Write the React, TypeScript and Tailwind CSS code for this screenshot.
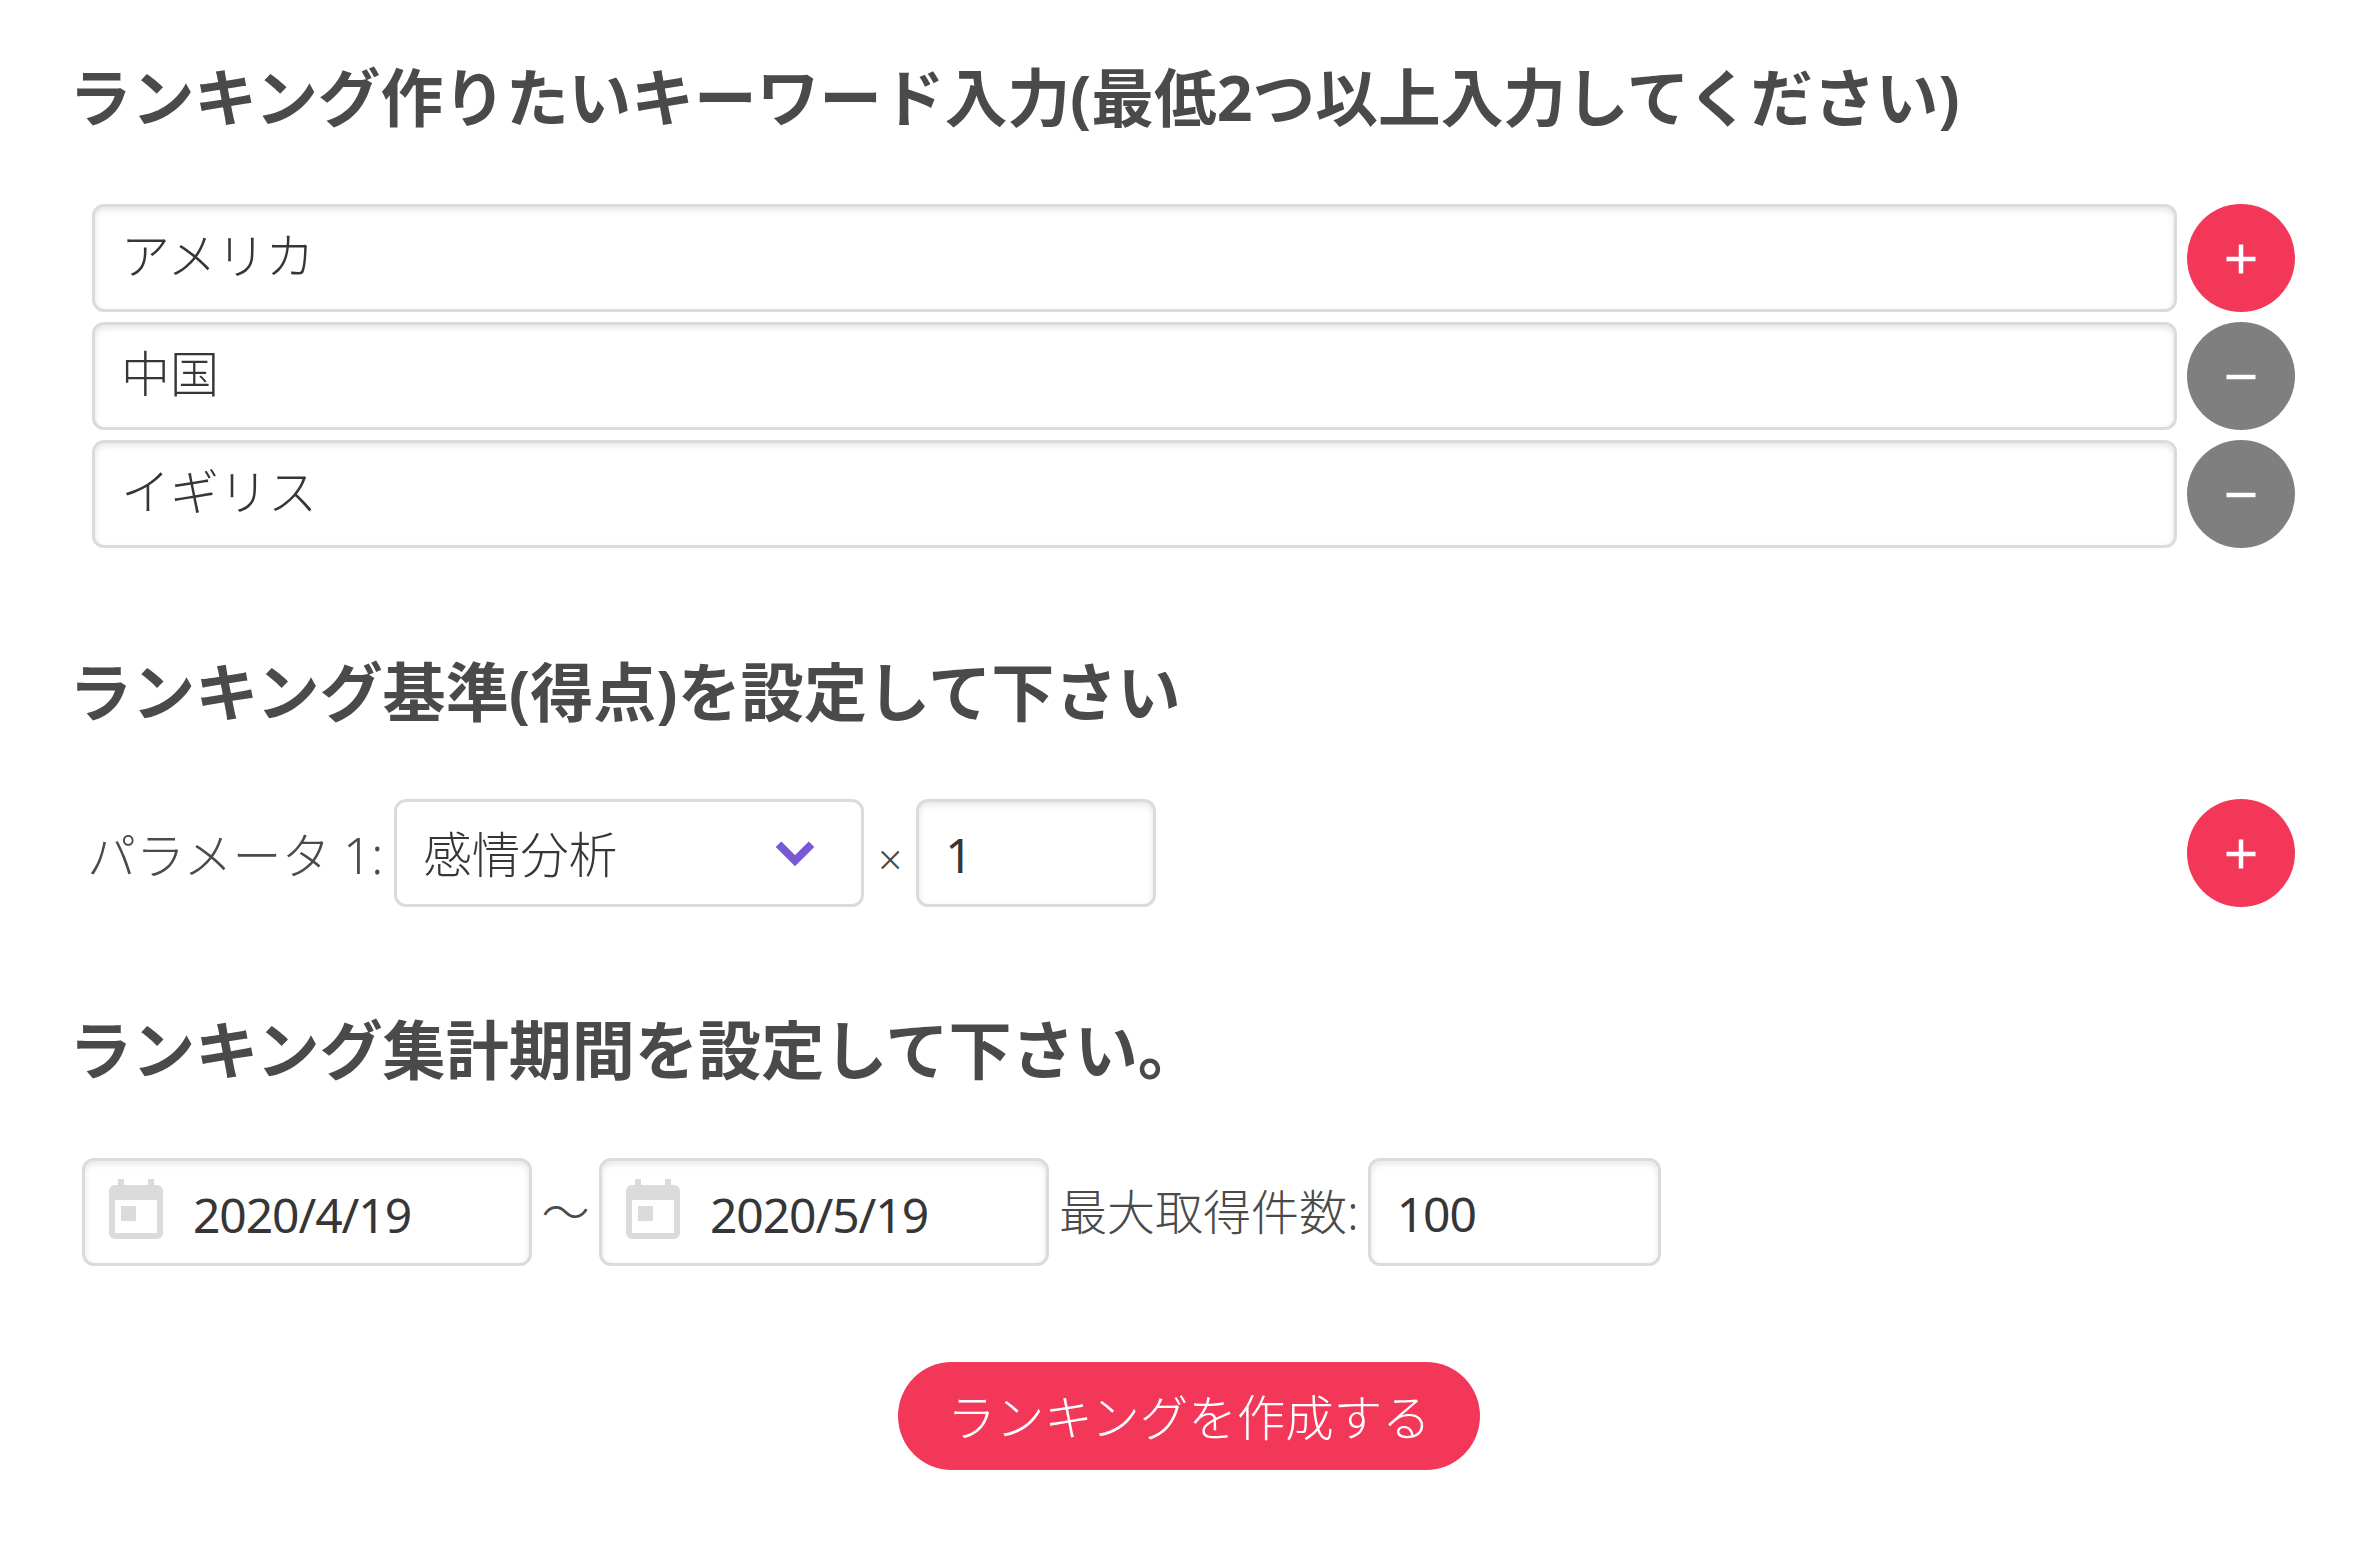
import React from "react";

const font = { fontFamily: '"Noto Sans", "Noto Sans CJK JP", sans-serif' };

function Circle({ kind }: { kind: "plus" | "minus" }) {
  return (
    <button
      className={`flex h-[108px] w-[108px] shrink-0 items-center justify-center rounded-full ${
        kind === "plus" ? "bg-[#f23759]" : "bg-[#7f7f7f]"
      }`}
    >
      <svg width="30" height="30" viewBox="0 0 30 30" fill="#fff" className="mt-[2px]">
        <rect x="0.5" y="12.75" width="29" height="4.5" />
        {kind === "plus" && <rect x="12.75" y="0.5" width="4.5" height="29" />}
      </svg>
    </button>
  );
}

const inputCls =
  "block h-[108px] rounded-[12px] border-[3px] border-[#dbdbdb] bg-white pr-[30px] pl-[26px] text-[#363636] shadow-[inset_0_3px_6px_rgba(10,10,10,0.1)] outline-none";

function Heading({ children, size }: { children: React.ReactNode; size: string }) {
  return (
    <h2 className={`-ml-[3px] h-[60px] leading-[57px] font-bold whitespace-nowrap text-[#4a4a4a] ${size}`}>
      {children}
    </h2>
  );
}

function DateField({ value }: { value: string }) {
  return (
    <div className="flex h-[108px] w-[450px] items-center rounded-[12px] border-[3px] border-[#dbdbdb] bg-white shadow-[inset_0_3px_6px_rgba(10,10,10,0.1)]">
      <svg width="72" height="72" viewBox="0 0 24 24" fill="#dbdbdb" className="mt-[-1px] ml-[15px] shrink-0">
        <path d="M7,10H12V15H7M19,19H5V8H19M19,3H18V1H16V3H8V1H6V3H5C3.89,3 3,3.9 3,5V19A2,2 0 0,0 5,21H19A2,2 0 0,0 21,19V5A2,2 0 0,0 19,3Z" />
      </svg>
      <span className="ml-[21px] pt-[6px] text-[48px] tracking-[-1.1px] text-[#363636]">{value}</span>
    </div>
  );
}

export default function App() {
  return (
    <div className="h-[1544px] w-[2364px] bg-white pt-[68px] pr-[69px] pl-[72px]" style={font}>
      <Heading size="text-[62.7px]">ランキング作りたいキーワード入力(最低2つ以上入力してください)</Heading>

      <div className="mt-[76px] ml-[20px] flex flex-col gap-[10px]">
        {[
          { v: "アメリカ", k: "plus" as const },
          { v: "中国", k: "minus" as const },
          { v: "イギリス", k: "minus" as const },
        ].map((r) => (
          <div key={r.v} className="flex items-center gap-[10px]">
            <input readOnly value={r.v} className={`${inputCls} min-w-0 flex-1 pb-[12px] text-[49px] font-light`} />
            <Circle kind={r.k} />
          </div>
        ))}
      </div>

      <div className="mt-[115px]">
        <Heading size="text-[63.1px]">ランキング基準(得点)を設定して下さい</Heading>
      </div>

      <div className="mt-[76px] flex items-center pl-[15px]">
        <span className="mr-[11px] pt-[6px] text-[49px] font-light whitespace-nowrap text-[#4a4a4a]">パラメータ 1:</span>
        <div className="relative flex h-[108px] w-[470px] items-center rounded-[12px] border-[3px] border-[#dbdbdb] bg-white pt-[3px] pl-[26px] text-[48.5px] font-light text-[#363636]">
          <span>感情分析</span>
          <svg width="72" height="72" viewBox="0 0 24 24" fill="#7957d5" className="absolute top-[15px] right-[30px]">
            <path d="M7.41,8.58L12,13.17L16.59,8.58L18,10L12,16L6,10L7.41,8.58Z" stroke="#7957d5" strokeWidth="0.6" />
          </svg>
        </div>
        <span className="w-[52px] pt-[10px] text-center text-[42px] font-light text-[#4a4a4a]">×</span>
        <input readOnly value="1" className={`${inputCls} w-[240px] pt-[3px] text-[48px]`} />
        <div className="ml-auto">
          <Circle kind="plus" />
        </div>
      </div>

      <div className="mt-[114px]">
        <Heading size="text-[63.1px]">ランキング集計期間を設定して下さい。</Heading>
      </div>

      <div className="mt-[77px] ml-[10px] flex items-center">
        <DateField value="2020/4/19" />
        <span className="w-[67px] text-center text-[48px] font-light text-[#4a4a4a]">〜</span>
        <DateField value="2020/5/19" />
        <span className="mr-[9px] ml-[10px] text-[48px] font-light whitespace-nowrap text-[#4a4a4a]">最大取得件数:</span>
        <input readOnly value="100" className={`${inputCls} w-[293px] pt-[3px] text-[48px] tracking-[-1.1px]`} />
      </div>

      <div className="mt-[96px] flex justify-center pl-[11px]">
        <button className="h-[108px] w-[582px] rounded-full bg-[#f23759] pt-[3px] text-[48.5px] font-light text-white">
          ランキングを作成する
        </button>
      </div>
    </div>
  );
}
